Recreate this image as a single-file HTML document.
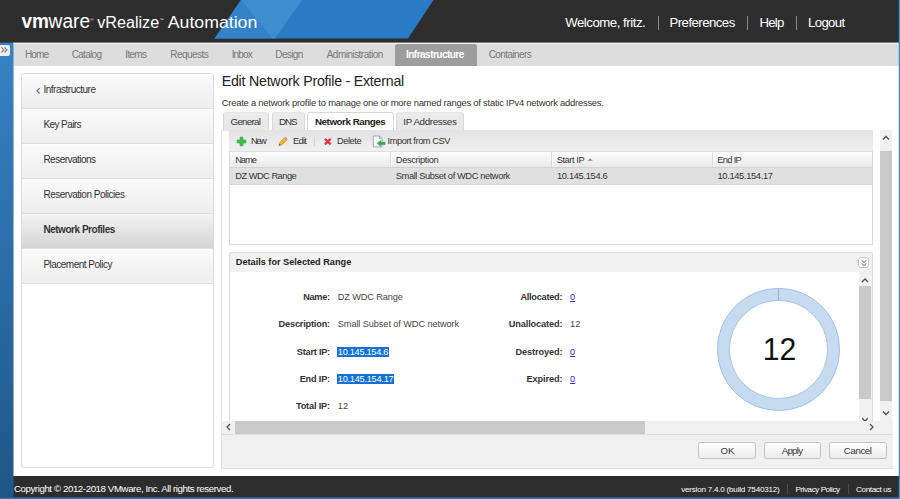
<!DOCTYPE html>
<html>
<head>
<meta charset="utf-8">
<title>vRealize Automation</title>
<style>
html,body{margin:0;padding:0;}
body{width:900px;height:499px;overflow:hidden;position:relative;font-family:"Liberation Sans",sans-serif;background:linear-gradient(#3a87ca,#1e5687);}
.t{position:absolute;white-space:nowrap;}
.r{position:absolute;}
svg{display:block;overflow:visible;}
</style>
</head>
<body>
<div class="r" style="left:13.00px;top:0.00px;width:886.00px;height:497.00px;background:#fff;"></div>
<div class="r" style="left:0.00px;top:0.00px;width:900.00px;height:42.00px;background:#2d2d2d;"></div>
<svg class="r" style="left:0;top:0" width="900" height="43" viewBox="0 0 900 43">
<rect x="0" y="42" width="13" height="1" fill="#314e68"/>
<polygon points="241,0 433.500,0 408,38.600 214.500,38.600" fill="#2a7bc5"/>
<polygon points="241,0 272.500,38.600 214.500,38.600" fill="#3483c9"/>
<polygon points="241,0 302,0 275,38.600 272.500,38.600" fill="#3f8ed0"/>
<text x="21.500" y="27.700" font-family="Liberation Sans, sans-serif" font-size="20" font-weight="bold" fill="#fff" textLength="27.500" lengthAdjust="spacingAndGlyphs">vm</text>
<text x="48.600" y="27.700" font-family="Liberation Sans, sans-serif" font-size="20" fill="#fff" textLength="41.500" lengthAdjust="spacingAndGlyphs">ware</text>
<text x="90.500" y="20.500" font-family="Liberation Sans, sans-serif" font-size="4" fill="#fff">®</text>
<text x="97.200" y="27.700" font-family="Liberation Sans, sans-serif" font-size="16" fill="#fff" textLength="62" lengthAdjust="spacingAndGlyphs">vRealize</text>
<text x="159.500" y="20.500" font-family="Liberation Sans, sans-serif" font-size="4" fill="#fff">™</text>
<text x="167.800" y="27.700" font-family="Liberation Sans, sans-serif" font-size="16" fill="#fff" textLength="89.500" lengthAdjust="spacingAndGlyphs">Automation</text>
</svg>
<div class="t" style="left:565.20px;top:14.00px;font-size:13.2px;line-height:17px;color:#fff;letter-spacing:-0.460px;">Welcome, fritz.</div>
<div class="r" style="left:657.50px;top:16.00px;width:1.00px;height:14.00px;background:#8a8a8a;"></div>
<div class="t" style="left:669.50px;top:14.00px;font-size:13.2px;line-height:17px;color:#fff;letter-spacing:-0.537px;">Preferences</div>
<div class="r" style="left:747.00px;top:16.00px;width:1.00px;height:14.00px;background:#8a8a8a;"></div>
<div class="t" style="left:759.40px;top:14.00px;font-size:13.2px;line-height:17px;color:#fff;letter-spacing:-0.749px;">Help</div>
<div class="r" style="left:796.20px;top:16.00px;width:1.00px;height:14.00px;background:#8a8a8a;"></div>
<div class="t" style="left:808.00px;top:14.00px;font-size:13.2px;line-height:17px;color:#fff;letter-spacing:-0.635px;">Logout</div>
<div class="r" style="left:13.00px;top:42.00px;width:886.00px;height:24.00px;background:#dddddd;"></div>
<div class="r" style="left:13.00px;top:42.00px;width:886.00px;height:1.00px;background:#7c7c7c;"></div>
<div class="r" style="left:13.00px;top:43.00px;width:886.00px;height:1.00px;background:#f0f0f0;"></div>
<div class="r" style="left:395.00px;top:43.60px;width:82.00px;height:22.40px;background:#9d9d9d;border-radius:2.5px 2.5px 0 0;"></div>
<div class="t" style="left:25.00px;top:48.00px;font-size:10px;line-height:13px;color:#777;letter-spacing:-0.892px;">Home</div>
<div class="t" style="left:71.70px;top:48.00px;font-size:10px;line-height:13px;color:#777;letter-spacing:-0.695px;">Catalog</div>
<div class="t" style="left:125.30px;top:48.00px;font-size:10px;line-height:13px;color:#777;letter-spacing:-0.687px;">Items</div>
<div class="t" style="left:170.30px;top:48.00px;font-size:10px;line-height:13px;color:#777;letter-spacing:-0.549px;">Requests</div>
<div class="t" style="left:231.70px;top:48.00px;font-size:10px;line-height:13px;color:#777;letter-spacing:-0.866px;">Inbox</div>
<div class="t" style="left:275.30px;top:48.00px;font-size:10px;line-height:13px;color:#777;letter-spacing:-0.626px;">Design</div>
<div class="t" style="left:326.70px;top:48.00px;font-size:10px;line-height:13px;color:#777;letter-spacing:-0.520px;">Administration</div>
<div class="t" style="left:406.00px;top:48.00px;font-size:10px;line-height:13px;color:#fff;font-weight:bold;letter-spacing:-0.517px;">Infrastructure</div>
<div class="t" style="left:488.70px;top:48.00px;font-size:10px;line-height:13px;color:#777;letter-spacing:-0.596px;">Containers</div>
<div class="r" style="left:0.00px;top:45.00px;width:9.80px;height:10.60px;background:#efefef;border-radius:0 2px 2px 0;"></div>
<svg class="r" style="left:0;top:45.300px" width="10" height="10" viewBox="0 0 10 10"><path d="M1.500 2.400 L3.800 4.900 L1.500 7.400 M4.600 2.400 L6.900 4.900 L4.600 7.400" fill="none" stroke="#777" stroke-width="1.100"/></svg>
<div class="r" style="left:21.00px;top:73.00px;width:193.00px;height:395.00px;background:#fff;border:1px solid #dcdcdc;border-radius:3px;box-sizing:border-box;"></div>
<div class="r" style="left:22.00px;top:74.00px;width:191.00px;height:35.00px;background:linear-gradient(#fff 0,#fafafa 3%,#eeeeee 100%);border-bottom:1px solid #dedede;box-sizing:border-box;border-radius:2px 2px 0 0;"></div>
<div class="t" style="left:43.40px;top:83.00px;font-size:10px;line-height:13px;color:#333;letter-spacing:-0.485px;">Infrastructure</div>
<div class="r" style="left:22.00px;top:109.00px;width:191.00px;height:35.00px;background:linear-gradient(#fff 0,#fafafa 3%,#eeeeee 100%);border-bottom:1px solid #dedede;box-sizing:border-box;"></div>
<div class="t" style="left:43.40px;top:118.00px;font-size:10px;line-height:13px;color:#333;letter-spacing:-0.574px;">Key Pairs</div>
<div class="r" style="left:22.00px;top:144.00px;width:191.00px;height:35.00px;background:linear-gradient(#fff 0,#fafafa 3%,#eeeeee 100%);border-bottom:1px solid #dedede;box-sizing:border-box;"></div>
<div class="t" style="left:43.40px;top:153.00px;font-size:10px;line-height:13px;color:#333;letter-spacing:-0.515px;">Reservations</div>
<div class="r" style="left:22.00px;top:179.00px;width:191.00px;height:35.00px;background:linear-gradient(#fff 0,#fafafa 3%,#eeeeee 100%);border-bottom:1px solid #dedede;box-sizing:border-box;"></div>
<div class="t" style="left:43.40px;top:188.00px;font-size:10px;line-height:13px;color:#333;letter-spacing:-0.479px;">Reservation Policies</div>
<div class="r" style="left:22.00px;top:214.00px;width:191.00px;height:35.00px;background:linear-gradient(#f4f4f4,#d4d4d4);border-bottom:1px solid #dedede;box-sizing:border-box;"></div>
<div class="t" style="left:43.40px;top:223.00px;font-size:10px;line-height:13px;color:#333;font-weight:bold;letter-spacing:-0.467px;">Network Profiles</div>
<div class="r" style="left:22.00px;top:249.00px;width:191.00px;height:35.00px;background:linear-gradient(#fff 0,#fafafa 3%,#eeeeee 100%);border-bottom:1px solid #dedede;box-sizing:border-box;"></div>
<div class="t" style="left:43.40px;top:258.00px;font-size:10px;line-height:13px;color:#333;letter-spacing:-0.513px;">Placement Policy</div>
<svg class="r" style="left:35.400px;top:84px" width="8" height="12" viewBox="0 0 8 12"><path d="M4.700 4.100 L2 6.800 L4.700 9.500" fill="none" stroke="#707070" stroke-width="1.200"/></svg>
<div class="t" style="left:221.70px;top:72.00px;font-size:14.2px;line-height:18px;color:#222;letter-spacing:-0.223px;">Edit Network Profile - External</div>
<div class="t" style="left:221.70px;top:96.00px;font-size:9.4px;line-height:13px;color:#333;letter-spacing:-0.218px;">Create a network profile to manage one or more named ranges of static IPv4 network addresses.</div>
<div class="r" style="left:221.00px;top:130.00px;width:671.70px;height:338.70px;background:#fff;border-left:1px solid #e2e2e2;box-sizing:border-box;"></div>
<div class="r" style="left:221.00px;top:130.00px;width:9.00px;height:1.00px;background:#e6e6e6;"></div>
<div class="r" style="left:223.00px;top:112.00px;width:46.00px;height:18.40px;background:linear-gradient(#ebebeb,#e7e7e7);border:1px solid #dadada;border-top-color:#e6e6e6;border-bottom:none;border-radius:3px 3px 0 0;box-sizing:border-box;"></div>
<div class="r" style="left:271.60px;top:112.00px;width:33.00px;height:18.40px;background:linear-gradient(#ebebeb,#e7e7e7);border:1px solid #dadada;border-top-color:#e6e6e6;border-bottom:none;border-radius:3px 3px 0 0;box-sizing:border-box;"></div>
<div class="r" style="left:307.20px;top:112.00px;width:86.40px;height:19.30px;background:#fff;border:1px solid #d6d6d6;border-bottom:none;border-radius:3px 3px 0 0;box-sizing:border-box;"></div>
<div class="r" style="left:396.20px;top:112.00px;width:67.80px;height:18.40px;background:linear-gradient(#ebebeb,#e7e7e7);border:1px solid #dadada;border-top-color:#e6e6e6;border-bottom:none;border-radius:3px 3px 0 0;box-sizing:border-box;"></div>
<div class="t" style="left:230.50px;top:115.00px;font-size:9.8px;line-height:13px;color:#333;letter-spacing:-0.727px;">General</div>
<div class="t" style="left:279.00px;top:115.00px;font-size:9.8px;line-height:13px;color:#333;letter-spacing:-1.096px;">DNS</div>
<div class="t" style="left:315.00px;top:115.00px;font-size:9.8px;line-height:13px;color:#222;font-weight:bold;letter-spacing:-0.461px;">Network Ranges</div>
<div class="t" style="left:403.30px;top:115.00px;font-size:9.8px;line-height:13px;color:#333;letter-spacing:-0.370px;">IP Addresses</div>
<div class="r" style="left:229.00px;top:130.00px;width:644.00px;height:115.00px;background:#fff;border:1px solid #d8d8d8;box-sizing:border-box;"></div>
<div class="r" style="left:229.00px;top:130.00px;width:644.00px;height:21.40px;background:linear-gradient(#e2e2e2,#f0f0f0);"></div>
<div class="r" style="left:230.00px;top:151.40px;width:642.00px;height:16.60px;background:linear-gradient(#fdfdfd,#e9e9e9);border-top:1px solid #dedede;border-bottom:1px solid #d2d2d2;box-sizing:border-box;"></div>
<div class="r" style="left:390.20px;top:152.40px;width:1.00px;height:14.60px;background:#dadada;"></div>
<div class="r" style="left:391.20px;top:152.40px;width:1.00px;height:14.60px;background:rgba(255,255,255,0.7);"></div>
<div class="r" style="left:550.80px;top:152.40px;width:1.00px;height:14.60px;background:#dadada;"></div>
<div class="r" style="left:551.80px;top:152.40px;width:1.00px;height:14.60px;background:rgba(255,255,255,0.7);"></div>
<div class="r" style="left:711.70px;top:152.40px;width:1.00px;height:14.60px;background:#dadada;"></div>
<div class="r" style="left:712.70px;top:152.40px;width:1.00px;height:14.60px;background:rgba(255,255,255,0.7);"></div>
<div class="r" style="left:230.00px;top:168.00px;width:642.00px;height:16.60px;background:#e0e0e0;border-bottom:1px dotted #d4d4d4;box-sizing:border-box;"></div>
<div class="t" style="left:251.10px;top:135.00px;font-size:9.3px;line-height:12px;color:#333;letter-spacing:-1.452px;">New</div>
<div class="t" style="left:293.00px;top:135.00px;font-size:9.3px;line-height:12px;color:#333;letter-spacing:-0.708px;">Edit</div>
<div class="r" style="left:314.20px;top:136.70px;width:1.00px;height:9.70px;background:#d4d4d4;"></div>
<div class="t" style="left:337.00px;top:135.00px;font-size:9.3px;line-height:12px;color:#333;letter-spacing:-0.457px;">Delete</div>
<div class="t" style="left:387.60px;top:135.00px;font-size:9.3px;line-height:12px;color:#333;letter-spacing:-0.453px;">Import from CSV</div>
<div class="t" style="left:235.20px;top:154.00px;font-size:9.3px;line-height:12px;color:#333;letter-spacing:-1.036px;">Name</div>
<div class="t" style="left:395.80px;top:154.00px;font-size:9.3px;line-height:12px;color:#333;letter-spacing:-0.352px;">Description</div>
<div class="t" style="left:556.70px;top:154.00px;font-size:9.3px;line-height:12px;color:#333;letter-spacing:-0.430px;">Start IP</div>
<div class="t" style="left:717.30px;top:154.00px;font-size:9.3px;line-height:12px;color:#333;letter-spacing:-0.684px;">End IP</div>
<svg class="r" style="left:587px;top:157.500px" width="7" height="4" viewBox="0 0 7 4"><path d="M0.300 2.700 L3.100 0.500 L5.900 2.700 Z" fill="#8a8a8a"/></svg>
<div class="t" style="left:235.20px;top:170.00px;font-size:9.3px;line-height:12px;color:#333;letter-spacing:-0.507px;">DZ WDC Range</div>
<div class="t" style="left:395.80px;top:170.00px;font-size:9.3px;line-height:12px;color:#333;letter-spacing:-0.407px;">Small Subset of WDC network</div>
<div class="t" style="left:556.90px;top:170.00px;font-size:9.3px;line-height:12px;color:#333;letter-spacing:-0.309px;">10.145.154.6</div>
<div class="t" style="left:717.50px;top:170.00px;font-size:9.3px;line-height:12px;color:#333;letter-spacing:-0.339px;">10.145.154.17</div>
<svg class="r" style="left:236.300px;top:135.600px" width="11" height="11" viewBox="0 0 11 11"><path d="M4.100 1.200 h2.800 v2.900 h2.900 v2.800 h-2.900 v2.900 h-2.800 v-2.900 h-2.900 v-2.800 h2.900 z" fill="#3fc24a" stroke="#2fa33a" stroke-width="0.700" stroke-linejoin="round"/></svg>
<svg class="r" style="left:278.200px;top:136px" width="11" height="11" viewBox="0 0 11 11"><path d="M1 9.500 L1.700 6.500 L6.600 1.600 L9 4 L4.100 8.900 Z" fill="#efb236" stroke="#c58a22" stroke-width="0.500"/><path d="M6.600 1.600 L7.600 0.700 L9.900 3 L9 4 Z" fill="#ef8f93"/><path d="M1 9.500 L1.400 7.900 L2.700 9.100 Z" fill="#444"/></svg>
<svg class="r" style="left:323px;top:137px" width="10" height="10" viewBox="0 0 10 10"><path d="M1.900 1.800 L7.700 7.400 M7.700 1.800 L1.900 7.400" stroke="#d9353f" stroke-width="2.200" stroke-linecap="butt"/></svg>
<svg class="r" style="left:372px;top:134.500px" width="15" height="14" viewBox="0 0 15 14"><path d="M1.300 1 H7.500 L10 3.500 V11.900 H1.300 Z" fill="#f4f8fc" stroke="#8fa4bd" stroke-width="0.900"/><path d="M7.500 1 V3.500 H10" fill="none" stroke="#8fa4bd" stroke-width="0.800"/><path d="M5.200 8.400 L8.600 5.500 V7.300 H13 V9.500 H8.600 V11.300 Z" fill="#3bae3e" stroke="#2b8c30" stroke-width="0.500"/></svg>
<div class="r" style="left:229.00px;top:252.00px;width:644.00px;height:182.40px;background:#fff;border:1px solid #dcdcdc;box-sizing:border-box;border-radius:2px;"></div>
<div class="r" style="left:230.00px;top:253.00px;width:642.00px;height:19.00px;background:#f2f2f2;"></div>
<div class="t" style="left:235.80px;top:256.00px;font-size:9.2px;line-height:12px;color:#222;font-weight:bold;letter-spacing:-0.018px;">Details for Selected Range</div>
<div class="r" style="left:858.00px;top:257.00px;width:11.00px;height:11.00px;background:#fff;border:1px solid #cccccc;border-radius:2.5px;box-sizing:border-box;"></div>
<svg class="r" style="left:858.500px;top:257.500px" width="10" height="10" viewBox="0 0 10 10"><path d="M2.600 2.300 L5 4.500 L7.400 2.300 M2.600 5.300 L5 7.500 L7.400 5.300" fill="none" stroke="#555" stroke-width="1"/></svg>
<div class="t" style="left:303.20px;top:291.00px;font-size:9.2px;line-height:12px;color:#333;font-weight:bold;letter-spacing:-0.280px;">Name:</div>
<div class="t" style="left:337.80px;top:291.00px;font-size:9.2px;line-height:12px;color:#444;letter-spacing:-0.123px;">DZ WDC Range</div>
<div class="t" style="left:278.60px;top:318.00px;font-size:9.2px;line-height:12px;color:#333;font-weight:bold;letter-spacing:-0.188px;">Description:</div>
<div class="t" style="left:337.80px;top:318.00px;font-size:9.2px;line-height:12px;color:#444;letter-spacing:-0.090px;">Small Subset of WDC network</div>
<div class="t" style="left:296.80px;top:346.00px;font-size:9.2px;line-height:12px;color:#333;font-weight:bold;letter-spacing:-0.234px;">Start IP:</div>
<div class="r" style="left:337.00px;top:346.60px;width:52.10px;height:10.50px;background:#1271d3;"></div>
<div class="t" style="left:337.80px;top:346.00px;font-size:9.2px;line-height:12px;color:#fff;letter-spacing:-0.274px;">10.145.154.6</div>
<div class="t" style="left:299.70px;top:373.00px;font-size:9.2px;line-height:12px;color:#333;font-weight:bold;letter-spacing:-0.198px;">End IP:</div>
<div class="r" style="left:337.00px;top:373.60px;width:57.30px;height:10.50px;background:#1271d3;"></div>
<div class="t" style="left:337.80px;top:373.00px;font-size:9.2px;line-height:12px;color:#fff;letter-spacing:-0.245px;">10.145.154.17</div>
<div class="t" style="left:295.90px;top:400.00px;font-size:9.2px;line-height:12px;color:#333;font-weight:bold;letter-spacing:-0.163px;">Total IP:</div>
<div class="t" style="left:337.80px;top:400.00px;font-size:9.2px;line-height:12px;color:#444;">12</div>
<div class="t" style="left:520.40px;top:291.00px;font-size:9.2px;line-height:12px;color:#333;font-weight:bold;letter-spacing:-0.253px;">Allocated:</div>
<div class="t" style="left:570.10px;top:291.00px;font-size:9.2px;line-height:12px;color:#2f2fd0;text-decoration:underline;">0</div>
<div class="t" style="left:508.80px;top:318.00px;font-size:9.2px;line-height:12px;color:#333;font-weight:bold;letter-spacing:-0.128px;">Unallocated:</div>
<div class="t" style="left:570.10px;top:318.00px;font-size:9.2px;line-height:12px;color:#444;">12</div>
<div class="t" style="left:515.60px;top:346.00px;font-size:9.2px;line-height:12px;color:#333;font-weight:bold;letter-spacing:-0.118px;">Destroyed:</div>
<div class="t" style="left:570.10px;top:346.00px;font-size:9.2px;line-height:12px;color:#2f2fd0;text-decoration:underline;">0</div>
<div class="t" style="left:526.40px;top:373.00px;font-size:9.2px;line-height:12px;color:#333;font-weight:bold;letter-spacing:-0.087px;">Expired:</div>
<div class="t" style="left:570.10px;top:373.00px;font-size:9.2px;line-height:12px;color:#2f2fd0;text-decoration:underline;">0</div>
<svg class="r" style="left:710px;top:280px" width="140" height="140" viewBox="710 280 140 140">
<circle cx="778.500" cy="349.400" r="55.100" fill="none" stroke="#c6daf0" stroke-width="12.200"/>
<circle cx="778.500" cy="349.400" r="61.100" fill="none" stroke="#9fbfe5" stroke-width="0.900"/>
<circle cx="778.500" cy="349.400" r="49.100" fill="none" stroke="#9fbfe5" stroke-width="0.900"/>
<line x1="778.500" y1="288.300" x2="778.500" y2="300.300" stroke="#94b7e0" stroke-width="1"/>
<text x="762.800" y="359.800" font-family="Liberation Sans, sans-serif" font-size="31" fill="#111" textLength="33.500" lengthAdjust="spacingAndGlyphs">12</text>
</svg>
<div class="r" style="left:859.00px;top:272.40px;width:13.20px;height:148.60px;background:#f0f0f0;"></div>
<div class="r" style="left:859.00px;top:286.20px;width:12.20px;height:113.30px;background:#c9c9c9;"></div>
<svg class="r" style="left:859px;top:276px" width="12" height="10" viewBox="0 0 12 10"><path d="M3 6 L6 3 L9 6" fill="none" stroke="#505050" stroke-width="1.300"/></svg>
<svg class="r" style="left:859px;top:415px" width="12" height="8" viewBox="0 0 12 8"><path d="M3.200 3.300 L6 6.100 L8.800 3.300" fill="none" stroke="#505050" stroke-width="1.300"/></svg>
<div class="r" style="left:880.00px;top:130.30px;width:12.20px;height:290.70px;background:#f0f0f0;"></div>
<div class="r" style="left:880.00px;top:151.00px;width:12.20px;height:249.50px;background:#c9c9c9;"></div>
<svg class="r" style="left:880px;top:133px" width="12" height="10" viewBox="0 0 12 10"><path d="M3 6.500 L6 3.500 L9 6.500" fill="none" stroke="#505050" stroke-width="1.300"/></svg>
<svg class="r" style="left:880px;top:408px" width="12" height="10" viewBox="0 0 12 10"><path d="M3 3.500 L6 6.500 L9 3.500" fill="none" stroke="#505050" stroke-width="1.300"/></svg>
<div class="r" style="left:222.00px;top:420.70px;width:670.70px;height:13.30px;background:#f0f0f0;"></div>
<div class="r" style="left:235.20px;top:420.70px;width:409.80px;height:13.30px;background:#c9c9c9;"></div>
<svg class="r" style="left:224px;top:421px" width="10" height="12" viewBox="0 0 10 12"><path d="M6 3 L3 6 L6 9" fill="none" stroke="#505050" stroke-width="1.300"/></svg>
<svg class="r" style="left:866px;top:421px" width="10" height="12" viewBox="0 0 10 12"><path d="M4 3 L7 6 L4 9" fill="none" stroke="#505050" stroke-width="1.300"/></svg>
<div class="r" style="left:221.00px;top:434.00px;width:672.00px;height:34.70px;background:#f0f0f0;border:1px solid #e0e0e0;border-top:1px solid #dedede;border-right:none;box-sizing:border-box;border-radius:0 0 0 3px;"></div>
<div class="r" style="left:698.30px;top:442.40px;width:57.50px;height:16.80px;background:linear-gradient(#ffffff,#ececec);border:1px solid #c2c2c2;border-radius:2.500px;box-sizing:border-box;"></div>
<div class="t" style="left:720.60px;top:444.00px;font-size:9.6px;line-height:13px;color:#333;letter-spacing:-0.170px;">OK</div>
<div class="r" style="left:764.40px;top:442.40px;width:56.40px;height:16.80px;background:linear-gradient(#ffffff,#ececec);border:1px solid #c2c2c2;border-radius:2.500px;box-sizing:border-box;"></div>
<div class="t" style="left:781.70px;top:444.00px;font-size:9.6px;line-height:13px;color:#333;letter-spacing:-0.679px;">Apply</div>
<div class="r" style="left:829.10px;top:442.40px;width:57.70px;height:16.80px;background:linear-gradient(#ffffff,#ececec);border:1px solid #c2c2c2;border-radius:2.500px;box-sizing:border-box;"></div>
<div class="t" style="left:843.80px;top:444.00px;font-size:9.6px;line-height:13px;color:#333;letter-spacing:-0.337px;">Cancel</div>
<div class="r" style="left:13.00px;top:476.00px;width:886.00px;height:21.00px;background:#2d2d2d;"></div>
<div class="t" style="left:13.90px;top:482.00px;font-size:9.7px;line-height:13px;color:#fff;letter-spacing:-0.411px;">Copyright © 2012-2018 VMware, Inc. All rights reserved.</div>
<div class="t" style="left:681.20px;top:484.00px;font-size:8.1px;line-height:11px;color:#fff;letter-spacing:-0.226px;">version 7.4.0 (build 7540312)</div>
<div class="r" style="left:787.20px;top:484.00px;width:1.00px;height:9.50px;background:#4c4c4c;"></div>
<div class="t" style="left:795.40px;top:484.00px;font-size:8.1px;line-height:11px;color:#fff;letter-spacing:-0.439px;">Privacy Policy</div>
<div class="r" style="left:848.30px;top:484.00px;width:1.00px;height:9.50px;background:#4c4c4c;"></div>
<div class="t" style="left:856.00px;top:484.00px;font-size:8.1px;line-height:11px;color:#fff;letter-spacing:-0.358px;">Contact us</div>
<div class="r" style="left:13.00px;top:43.00px;width:1.00px;height:454.00px;background:linear-gradient(#3884c6,#1e5687);opacity:0.5;"></div>
<div class="r" style="left:0.00px;top:497.00px;width:900.00px;height:1.00px;background:#2b5d8c;"></div>
<div class="r" style="left:0.00px;top:498.00px;width:900.00px;height:1.00px;background:#2a79c2;"></div>
<div class="r" style="left:899.00px;top:0.00px;width:1.00px;height:499.00px;background:#3b8ad6;"></div>
<div class="r" style="left:898.00px;top:0.00px;width:1.00px;height:499.00px;background:rgba(59,138,214,0.28);"></div>
</body>
</html>
